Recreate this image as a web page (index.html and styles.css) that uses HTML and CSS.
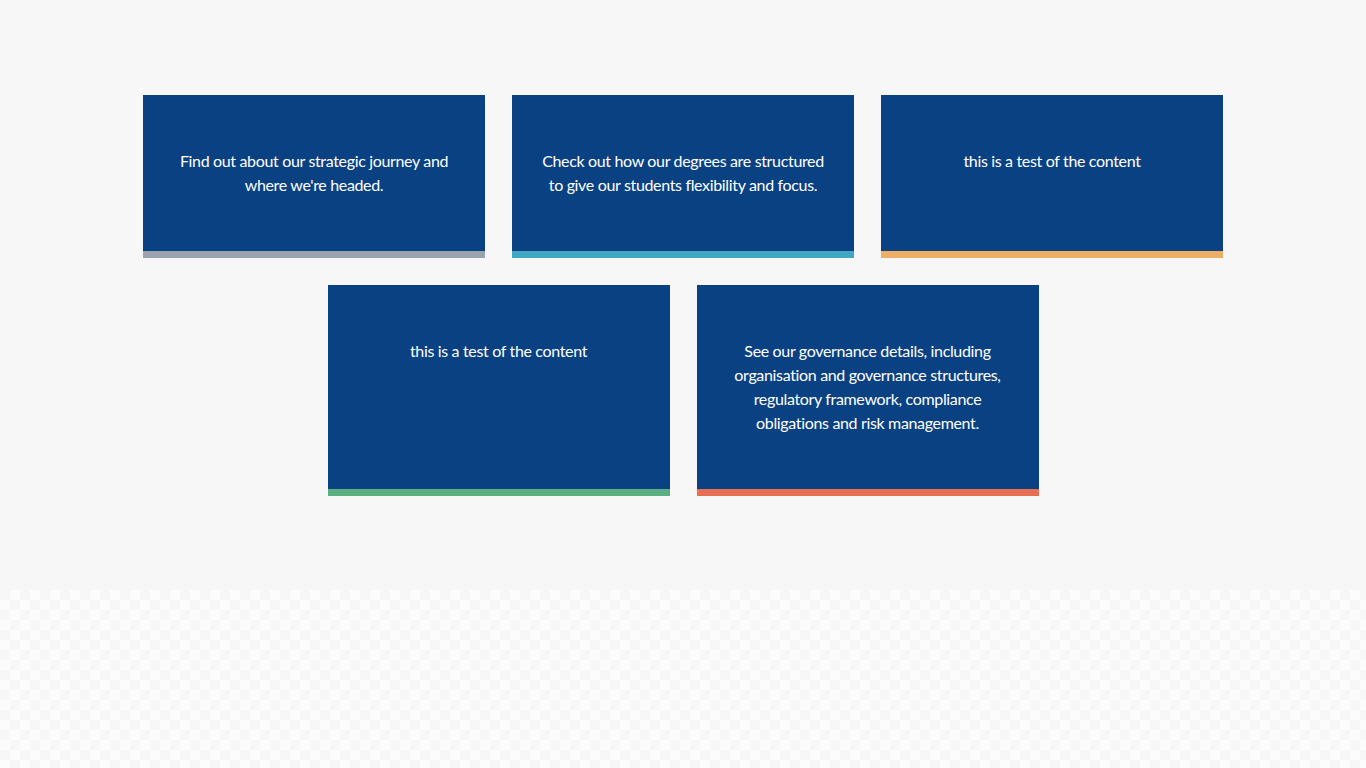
FILE: index.html
```html
<!DOCTYPE html>
<html lang="en">
<head>
<meta charset="utf-8">
<title>Tiles</title>
<link rel="stylesheet" href="styles.css">
</head>
<body>
<section class="tiles">
  <div class="grid">
    <a class="tile tile--grey" href="#"><p>Find out about our strategic journey and where we're headed.</p></a>
    <a class="tile tile--teal" href="#"><p>Check out how our degrees are structured to give our students flexibility and focus.</p></a>
    <a class="tile tile--orange" href="#"><p>this is a test of the content</p></a>
    <a class="tile tile--green" href="#"><p>this is a test of the content</p></a>
    <a class="tile tile--red" href="#"><p>See our governance details, including organisation and governance structures, regulatory framework, compliance obligations and risk management.</p></a>
  </div>
</section>
<section class="pattern"></section>
</body>
</html>
```

FILE: styles.css
```css
html, body {
  margin: 0;
  padding: 0;
  background: #f7f7f7;
  font-family: Lato, "Open Sans", "Liberation Sans", sans-serif;
}
.tiles {
  height: 590px;
  box-sizing: border-box;
  padding-top: 95px;
  background: #f7f7f7;
}
.grid {
  width: 1080px;
  margin: 0 auto;
  display: flex;
  flex-wrap: wrap;
  justify-content: center;
  gap: 27px;
}
.tile {
  width: 342px;
  box-sizing: border-box;
  background: #0a4183;
  color: #ffffff;
  text-decoration: none;
  padding: 54px 26px;
  border-bottom: 7px solid #9aa3ad;
  text-align: center;
}
.tile p {
  margin: 0;
  font-size: 16px;
  letter-spacing: -0.34px;
  line-height: 24px;
}
.tile--grey { border-bottom-color: #9aa3ad; }
.tile--teal { border-bottom-color: #40a7c6; }
.tile--orange { border-bottom-color: #efae66; }
.tile--green { border-bottom-color: #5aaf80; }
.tile--red { border-bottom-color: #e86e53; }
.pattern {
  height: 178px;
  background: repeating-conic-gradient(#fcfcfc 0 25%, #f7f7f7 0 50%) 0 0 / 20px 20px;
}
```
